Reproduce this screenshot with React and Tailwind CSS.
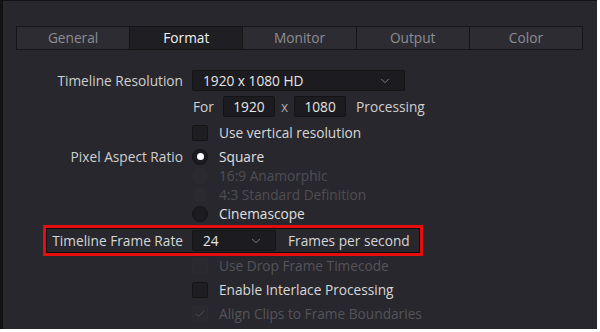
import { ChevronDown, Check } from "lucide-react";

const tabs = ["General", "Format", "Monitor", "Output", "Color"];

function Select({ value, width }) {
  return (
    <div
      className={`flex h-[21px] items-center justify-between rounded-[2px] border border-[#141417] bg-[#1c1b20] pl-[10px] pr-[12px] text-[#e6e6e6] ${width}`}
    >
      <span>{value}</span>
      <ChevronDown size={14} strokeWidth={1.5} className="text-[#8c8c90]" />
    </div>
  );
}

function Field({ value }) {
  return (
    <div className="flex h-[21px] w-[52px] items-center justify-center rounded-[2px] border border-[#141417] bg-[#1c1b20] text-[#e6e6e6]">
      {value}
    </div>
  );
}

function Checkbox({ label, dim, checked }) {
  return (
    <div className="flex items-center gap-[11px]">
      <div
        className={`flex h-[16px] w-[16px] items-center justify-center rounded-[2px] border ${
          dim ? "border-[#2c2b31] bg-[#2a292f]" : "border-[#141417] bg-[#1e1d22]"
        }`}
      >
        {checked && <Check size={12} strokeWidth={2} className="text-[#4a494f]" />}
      </div>
      <span className={dim ? "text-[#55545a]" : "text-[#d8d8d8]"}>{label}</span>
    </div>
  );
}

function Radio({ label, state }) {
  return (
    <div className="flex h-[19px] items-center gap-[11px]">
      <div
        className={`flex h-[16px] w-[16px] items-center justify-center rounded-full ${
          state === "dim" ? "bg-[#2b2a30]" : "border border-[#141417] bg-[#1c1b20]"
        }`}
      >
        {state === "on" && <div className="h-[7px] w-[7px] rounded-full bg-white" />}
      </div>
      <span className={state === "dim" ? "text-[#4f4e54]" : "text-[#e0e0e0]"}>{label}</span>
    </div>
  );
}

export default function App() {
  return (
    <div
      className="h-[332px] w-[600px] bg-white text-[13.7px] leading-none"
      style={{ fontFamily: '"Open Sans", "Noto Sans", sans-serif' }}
    >
      <div className="h-[329px] w-[597px] border-l-[3px] border-t border-[#121214] bg-[#28272d] pt-[25px]">
        {/* Tabs */}
        <div className="ml-[13px] flex h-[24px] w-[567px] border border-[#151518] bg-[#2d2c32]">
          {tabs.map((t, i) => (
            <div
              key={t}
              className={`flex flex-1 items-center justify-center ${
                i > 0 ? "border-l border-[#151518]" : ""
              } ${t === "Format" ? "bg-[#1f1e23] text-[#f2f2f2]" : "text-[#8e8d92]"}`}
            >
              {t}
            </div>
          ))}
        </div>

        {/* Form */}
        <div className="mt-[20px] flex flex-col">
          <div className="flex items-center">
            <div className="w-[180px] text-right text-[#cfcfcf]">Timeline Resolution</div>
            <div className="ml-[9px]">
              <Select value="1920 x 1080 HD" width="w-[213px]" />
            </div>
          </div>

          <div className="mt-[5px] flex items-center pl-[190px] text-[#cfcfcf]">
            <span>For</span>
            <div className="ml-[9px]">
              <Field value="1920" />
            </div>
            <span className="mx-[6px] text-[#a8a8a8]">x</span>
            <Field value="1080" />
            <span className="ml-[10px]">Processing</span>
          </div>

          <div className="mt-[8px] pl-[189px]">
            <Checkbox label="Use vertical resolution" dim={false} />
          </div>

          <div className="mt-[6px] flex items-start">
            <div className="flex h-[19px] w-[180px] items-center justify-end text-[#cfcfcf]">
              Pixel Aspect Ratio
            </div>
            <div className="ml-[9px] flex flex-col">
              <Radio label="Square" state="on" />
              <Radio label="16:9 Anamorphic" state="dim" />
              <Radio label="4:3 Standard Definition" state="dim" />
              <Radio label="Cinemascope" state="off" />
            </div>
          </div>

          {/* Highlighted frame rate row */}
          <div className="ml-[40px] mt-[2px] flex h-[31px] w-[380px] items-center border-[3px] border-[#e50d0d] outline outline-1 -outline-offset-4 outline-[#0c0c0e]">
            <div className="w-[137px] text-right text-[#d6d6d6]">Timeline Frame Rate</div>
            <div className="ml-[9px]">
              <Select value="24" width="w-[84px]" />
            </div>
            <span className="ml-[12px] text-[#d6d6d6]">Frames per second</span>
          </div>

          <div className="mt-[2px] flex flex-col gap-[8px] pl-[189px]">
            <Checkbox label="Use Drop Frame Timecode" dim />
            <Checkbox label="Enable Interlace Processing" dim={false} />
            <Checkbox label="Align Clips to Frame Boundaries" dim checked />
          </div>
        </div>
      </div>
    </div>
  );
}
